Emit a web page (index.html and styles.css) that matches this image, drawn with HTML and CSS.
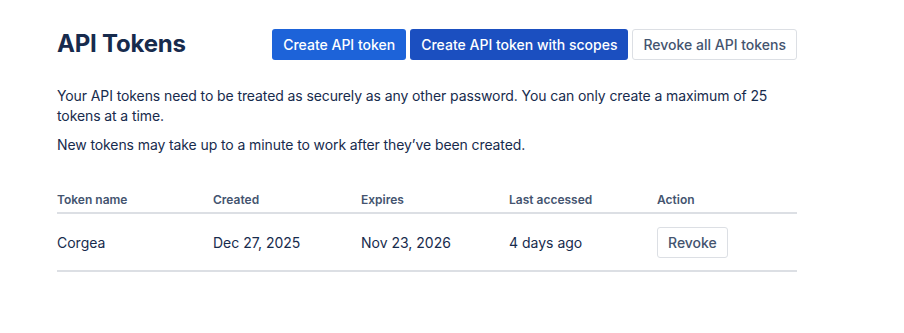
FILE: index.html
```html
<!DOCTYPE html>
<html lang="en">
  <head>
    <meta charset="UTF-8" />
    <title>API Tokens</title>
    <link rel="stylesheet" href="styles.css">
  </head>
  <body>
    <div class="page">
      <div class="header">
        <h1>API Tokens</h1>
        <div class="actions">
          <button class="btn btn-primary">Create API token</button>
          <button class="btn btn-primary btn-dark">Create API token with scopes</button>
          <button class="btn btn-default">Revoke all API tokens</button>
        </div>
      </div>

      <p class="intro">
        Your API tokens need to be treated as securely as any other password. You can only create a maximum of 25
        tokens at a time.
      </p>
      <p class="intro">New tokens may take up to a minute to work after they’ve been created.</p>

      <table class="tokens">
        <thead>
          <tr>
            <th class="col-name">Token name</th>
            <th class="col-date">Created</th>
            <th class="col-date">Expires</th>
            <th class="col-date">Last accessed</th>
            <th>Action</th>
          </tr>
        </thead>
        <tbody>
          <tr>
            <td>Corgea</td>
            <td>Dec 27, 2025</td>
            <td>Nov 23, 2026</td>
            <td>4 days ago</td>
            <td><button class="btn btn-default">Revoke</button></td>
          </tr>
        </tbody>
      </table>
    </div>
  </body>
</html>
```

FILE: styles.css
```css
* {
  margin: 0;
  padding: 0;
  box-sizing: border-box;
}

body {
  font-family: Inter, "Noto Sans", Arial, sans-serif;
  color: #172b4d;
  background: #ffffff;
}

.page {
  width: 740px;
  margin-left: 57px;
  padding-top: 28px;
}

.header {
  display: flex;
  align-items: center;
  justify-content: space-between;
  margin-bottom: 26px;
}

h1 {
  font-size: 24px;
  font-weight: 700;
  line-height: 32px;
  color: #172b4d;
  letter-spacing: -0.2px;
}

.actions {
  display: flex;
  gap: 4px;
}

.btn {
  font-family: inherit;
  font-size: 14px;
  font-weight: 500;
  height: 31px;
  padding: 0 10px;
  border-radius: 3px;
  border: 1px solid transparent;
  cursor: pointer;
}

.btn-primary {
  background: #1d63d9;
  color: #ffffff;
}

.btn-dark {
  background: #1b4fc0;
}

.btn-default {
  background: #ffffff;
  border-color: #dcdfe4;
  color: #44546f;
}

.intro {
  font-size: 14px;
  line-height: 20px;
  margin-bottom: 9px;
  letter-spacing: -0.1px;
}

.tokens {
  width: 100%;
  margin-top: 37px;
  border-collapse: collapse;
  font-size: 14px;
}

.tokens th {
  text-align: left;
  font-size: 12px;
  font-weight: 600;
  color: #44546f;
  padding: 0 0 5px;
  border-bottom: 2px solid #dcdfe4;
}

.tokens .col-name {
  width: 156px;
}

.tokens .col-date {
  width: 148px;
}

.tokens td {
  padding: 13px 0 12px;
  border-bottom: 2px solid #dcdfe4;
  color: #172b4d;
}
```
